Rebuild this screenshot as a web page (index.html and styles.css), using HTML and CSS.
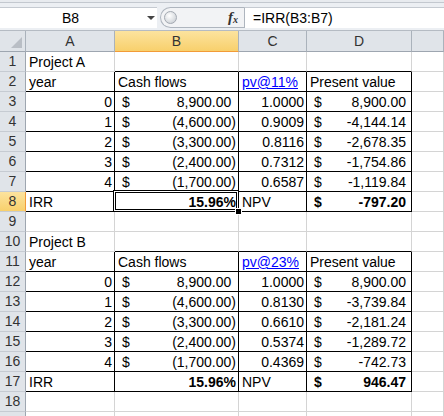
FILE: index.html
```html
<!DOCTYPE html>
<html lang="en">
<head>
    <meta charset="UTF-8">
    <title>IRR and NPV</title>
    <link rel="stylesheet" href="styles.css">
</head>
<body>
    <div class="ribbon"></div>
    <div class="formula-bar">
        <div class="name-box">B8<span class="drop"></span></div>
        <div class="splitter"><span class="knob"></span><span class="fx">f<sub>x</sub></span></div>
        <div class="formula">=IRR(B3:B7)</div>
    </div>

    <div class="sheet">
        <!-- column headers -->
        <div class="ch corner"></div>
        <div class="ch">A</div>
        <div class="ch sel">B</div>
        <div class="ch">C</div>
        <div class="ch">D</div>
        <div class="ch"></div>

        <!-- Project A -->
        <div class="rh">1</div>
        <div class="c">Project A</div>
        <div class="c bb"></div>
        <div class="c bb"></div>
        <div class="c bb"></div>
        <div class="c"></div>

        <div class="rh">2</div>
        <div class="c bb br">year</div>
        <div class="c bb br">Cash flows</div>
        <div class="c bb br"><span class="link">pv@11%</span></div>
        <div class="c bb br">Present value</div>
        <div class="c"></div>

        <div class="rh">3</div>
        <div class="c bb br r">0</div>
        <div class="c bb br acc"><span>$</span><span>8,900.00<span class="pad">)</span></span></div>
        <div class="c bb br r">1.0000</div>
        <div class="c bb br acc pv"><span>$</span><span>8,900.00</span></div>
        <div class="c"></div>

        <div class="rh">4</div>
        <div class="c bb br r">1</div>
        <div class="c bb br acc"><span>$</span><span>(4,600.00)</span></div>
        <div class="c bb br r">0.9009</div>
        <div class="c bb br acc pv"><span>$</span><span>-4,144.14</span></div>
        <div class="c"></div>

        <div class="rh">5</div>
        <div class="c bb br r">2</div>
        <div class="c bb br acc"><span>$</span><span>(3,300.00)</span></div>
        <div class="c bb br r">0.8116</div>
        <div class="c bb br acc pv"><span>$</span><span>-2,678.35</span></div>
        <div class="c"></div>

        <div class="rh">6</div>
        <div class="c bb br r">3</div>
        <div class="c bb br acc"><span>$</span><span>(2,400.00)</span></div>
        <div class="c bb br r">0.7312</div>
        <div class="c bb br acc pv"><span>$</span><span>-1,754.86</span></div>
        <div class="c"></div>

        <div class="rh">7</div>
        <div class="c bb br r">4</div>
        <div class="c bb br acc"><span>$</span><span>(1,700.00)</span></div>
        <div class="c bb br r">0.6587</div>
        <div class="c bb br acc pv"><span>$</span><span>-1,119.84</span></div>
        <div class="c"></div>

        <div class="rh sel">8</div>
        <div class="c bb br">IRR</div>
        <div class="c bb br r b active">15.96%</div>
        <div class="c bb br">NPV</div>
        <div class="c bb br acc pv b"><span>$</span><span>-797.20</span></div>
        <div class="c"></div>

        <div class="rh">9</div>
        <div class="c"></div>
        <div class="c"></div>
        <div class="c"></div>
        <div class="c"></div>
        <div class="c"></div>

        <!-- Project B -->
        <div class="rh">10</div>
        <div class="c">Project B</div>
        <div class="c bb"></div>
        <div class="c bb"></div>
        <div class="c bb"></div>
        <div class="c"></div>

        <div class="rh">11</div>
        <div class="c bb br">year</div>
        <div class="c bb br">Cash flows</div>
        <div class="c bb br"><span class="link">pv@23%</span></div>
        <div class="c bb br">Present value</div>
        <div class="c"></div>

        <div class="rh">12</div>
        <div class="c bb br r">0</div>
        <div class="c bb br acc"><span>$</span><span>8,900.00<span class="pad">)</span></span></div>
        <div class="c bb br r">1.0000</div>
        <div class="c bb br acc pv"><span>$</span><span>8,900.00</span></div>
        <div class="c"></div>

        <div class="rh">13</div>
        <div class="c bb br r">1</div>
        <div class="c bb br acc"><span>$</span><span>(4,600.00)</span></div>
        <div class="c bb br r">0.8130</div>
        <div class="c bb br acc pv"><span>$</span><span>-3,739.84</span></div>
        <div class="c"></div>

        <div class="rh">14</div>
        <div class="c bb br r">2</div>
        <div class="c bb br acc"><span>$</span><span>(3,300.00)</span></div>
        <div class="c bb br r">0.6610</div>
        <div class="c bb br acc pv"><span>$</span><span>-2,181.24</span></div>
        <div class="c"></div>

        <div class="rh">15</div>
        <div class="c bb br r">3</div>
        <div class="c bb br acc"><span>$</span><span>(2,400.00)</span></div>
        <div class="c bb br r">0.5374</div>
        <div class="c bb br acc pv"><span>$</span><span>-1,289.72</span></div>
        <div class="c"></div>

        <div class="rh">16</div>
        <div class="c bb br r">4</div>
        <div class="c bb br acc"><span>$</span><span>(1,700.00)</span></div>
        <div class="c bb br r">0.4369</div>
        <div class="c bb br acc pv"><span>$</span><span>-742.73</span></div>
        <div class="c"></div>

        <div class="rh">17</div>
        <div class="c bb br">IRR</div>
        <div class="c bb br r b">15.96%</div>
        <div class="c bb br">NPV</div>
        <div class="c bb br acc pv b"><span>$</span><span>946.47</span></div>
        <div class="c"></div>

        <div class="rh">18</div>
        <div class="c"></div>
        <div class="c"></div>
        <div class="c"></div>
        <div class="c"></div>
        <div class="c"></div>

        <!-- row 19 only peeks in at the bottom edge -->
        <div class="rh"></div>
        <div class="c"></div>
        <div class="c"></div>
        <div class="c"></div>
        <div class="c"></div>
        <div class="c"></div>
    </div>
</body>
</html>
```

FILE: styles.css
```css
body {
    margin: 0;
    font-family: "Liberation Sans", Arial, sans-serif;
    font-size: 14px;
    color: #000;
    background: #fff;
    overflow: hidden;
}

/* formula bar */
.ribbon {
    height: 2px;
    background: #e8ebef;
    border-bottom: 1px solid #c3c8cf;
}
.formula-bar {
    display: flex;
    height: 21px;
    padding: 4px 0 2px;
    background: #eceff3;
    border-bottom: 1px solid #b5bbc3;
}
.name-box {
    position: relative;
    width: 157px;
    box-sizing: border-box;
    padding-right: 16px;
    background: #fff;
    border-top: 1px solid #c5cad1;
    text-align: center;
    line-height: 20px;
}
.drop {
    position: absolute;
    right: 2px;
    top: 8px;
    border-left: 4px solid transparent;
    border-right: 4px solid transparent;
    border-top: 4px solid #444;
}
.splitter {
    position: relative;
    width: 84px;
    margin-left: 3px;
    box-sizing: border-box;
    background: #f2f3f5;
    border: 1px solid #aeb5be;
    border-right: none;
    border-radius: 11px 0 0 11px;
    text-align: right;
    padding-right: 6px;
}
.knob {
    position: absolute;
    left: 3px;
    top: 3px;
    width: 11px;
    height: 11px;
    border-radius: 50%;
    border: 1px solid #a3a9b1;
    background: radial-gradient(circle at 40% 35%, #fff, #c3c8ce);
}
.fx {
    font-family: "Liberation Serif", serif;
    font-style: italic;
    font-weight: bold;
    font-size: 15px;
    line-height: 19px;
    color: #333;
}
.fx sub {
    font-size: 10px;
    vertical-align: -1px;
}
.formula {
    flex: 1;
    padding-left: 8px;
    background: #fff;
    border-left: 1px solid #aeb5be;
    border-top: 1px solid #c5cad1;
    line-height: 20px;
}

/* grid */
.sheet {
    display: grid;
    grid-template-columns: 26px 89px 124px 68px 105px 1fr;
    grid-template-rows: 21px;
    grid-auto-rows: 20px;
}
.sheet > div {
    box-sizing: border-box;
}
.ch {
    background: #e0e4e9;
    border-right: 1px solid #aab2bb;
    border-bottom: 1px solid #9ea6b0;
    text-align: center;
    line-height: 20px;
    color: #333;
}
.corner {
    position: relative;
}
.corner::after {
    content: "";
    position: absolute;
    right: 3px;
    bottom: 3px;
    border-left: 11px solid transparent;
    border-bottom: 11px solid #b9bec5;
}
.rh {
    background: #e0e4e9;
    border-right: 1px solid #9ea6b0;
    border-bottom: 1px solid #c6cbd2;
    text-align: center;
    line-height: 19px;
    color: #333;
}
.ch.sel {
    background: linear-gradient(#fce39e, #f8d06c);
    border-bottom-color: #f29b38;
}
.rh.sel {
    background: linear-gradient(#fce39e, #f8d06c);
    border-right-color: #f29b38;
}
.c {
    padding: 1px 3px 0;
    line-height: 18px;
    white-space: nowrap;
    border-right: 1px solid #d4d4d4;
    border-bottom: 1px solid #d4d4d4;
}
.bb {
    border-bottom-color: #000;
}
.br {
    border-right-color: #000;
}
.r {
    text-align: right;
    padding-right: 2px;
}
.acc {
    display: flex;
    justify-content: space-between;
    padding-left: 7px;
    padding-right: 2px;
}
.acc.pv {
    padding-right: 5px;
}
.pad {
    visibility: hidden;
}
.b {
    font-weight: bold;
}
.link {
    color: #0000ff;
    text-decoration: underline;
}

/* active cell frame and fill handle */
.active {
    position: relative;
}
.active::before {
    content: "";
    position: absolute;
    left: -2px;
    top: -2px;
    right: -1px;
    bottom: -1px;
    border: 1px solid #000;
    box-shadow: inset 0 0 0 1px #fff, inset 0 0 0 2px #000;
    z-index: 1;
}
.active::after {
    content: "";
    position: absolute;
    right: -3px;
    bottom: -3px;
    width: 5px;
    height: 5px;
    background: #000;
    outline: 1px solid #fff;
    z-index: 2;
}
```
